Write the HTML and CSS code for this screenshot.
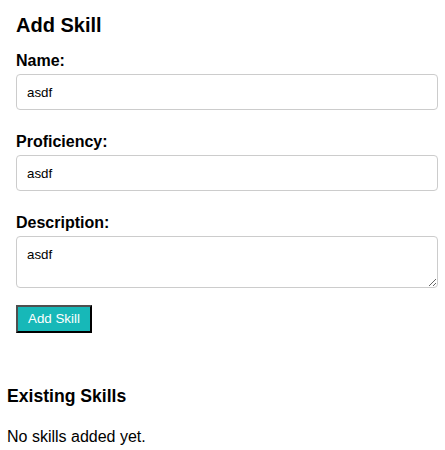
FILE: index.html
```html
<!DOCTYPE html>
<html lang="en">
<head>
<meta charset="utf-8">
<title>Add Skill</title>
<link rel="stylesheet" href="styles.css">
</head>
<body>
<section class="add-skill">
  <h2 class="title">Add Skill</h2>
  <form class="skill-form">
    <div class="field">
      <label class="field-label" for="name">Name:</label>
      <input class="text-input" id="name" type="text" value="asdf">
    </div>
    <div class="field">
      <label class="field-label" for="prof">Proficiency:</label>
      <input class="text-input" id="prof" type="text" value="asdf">
    </div>
    <div class="field field-last">
      <label class="field-label" for="desc">Description:</label>
      <textarea class="text-area" id="desc">asdf</textarea>
    </div>
    <button class="submit-btn" type="button">Add Skill</button>
  </form>
</section>
<section class="existing">
  <h3 class="existing-title">Existing Skills</h3>
  <p class="empty-note">No skills added yet.</p>
</section>
</body>
</html>
```
FILE: styles.css
```css
* { box-sizing: border-box; }
body {
  margin: 0;
  font-family: "Liberation Sans", Arial, sans-serif;
  color: #000;
  background: #fff;
}
.add-skill {
  padding: 14px 0 0 16px;
}
.title {
  margin: 0 0 15px;
  font-size: 20px;
  line-height: 23px;
  font-weight: bold;
}
.skill-form {
  margin: 0;
}
.field {
  margin-bottom: 23px;
}
.field-last {
  margin-bottom: 17px;
}
.field-label {
  display: block;
  font-size: 16px;
  line-height: 18px;
  font-weight: bold;
  margin-bottom: 4px;
}
.text-input,
.text-area {
  display: block;
  width: 422px;
  margin: 0;
  border: 1px solid #ccc;
  border-radius: 4px;
  font-family: "Liberation Sans", Arial, sans-serif;
  font-size: 13.33px;
  line-height: 15px;
  color: #000;
  background: #fff;
}
.text-input {
  height: 36px;
  padding: 0 10px;
}
.text-area {
  height: 52px;
  padding: 10px;
  resize: vertical;
}
.submit-btn {
  display: block;
  margin: 0;
  padding: 4px 10px;
  height: 28px;
  font-family: "Liberation Sans", Arial, sans-serif;
  font-size: 13.33px;
  line-height: 16px;
  color: #fff;
  background: #17b8b8;
  border-width: 2px;
  border-style: solid;
  border-color: #4f4f4f #000 #000 #4f4f4f;
}
.existing {
  padding: 53px 0 0 7px;
}
.existing-title {
  margin: 0 0 22px;
  font-size: 17.6px;
  line-height: 20px;
  font-weight: bold;
}
.empty-note {
  margin: 0;
  font-size: 16px;
  line-height: 18px;
}
```
